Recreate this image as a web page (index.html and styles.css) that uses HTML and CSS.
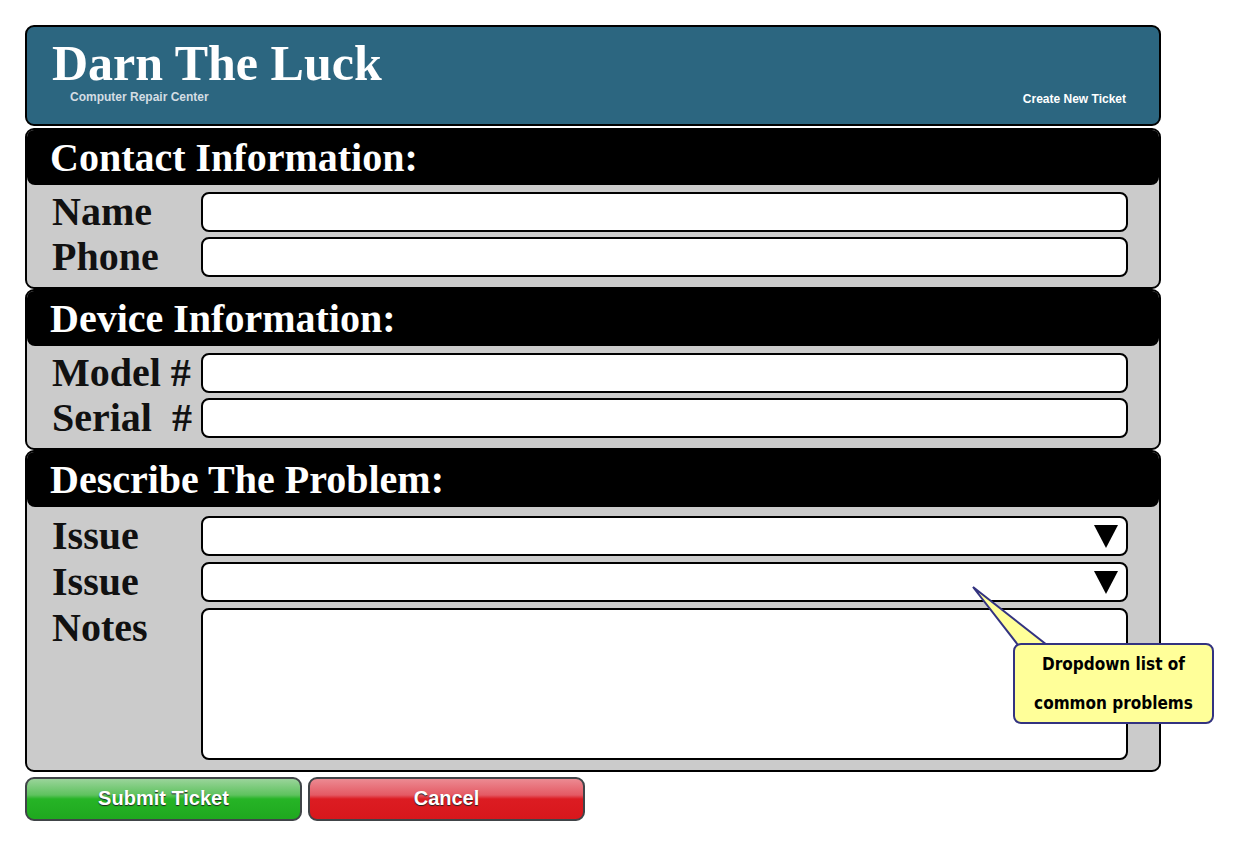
FILE: index.html
```html
<!DOCTYPE html>
<html>
<head>
<meta charset="utf-8">
<link rel="stylesheet" href="styles.css">
</head>
<body>
<div class="page">
  <header class="masthead">
    <div class="brand">
      <h1 class="brand-title">Darn The Luck</h1>
      <div class="brand-sub">Computer Repair Center</div>
    </div>
    <div class="masthead-link">Create New Ticket</div>
  </header>

  <div class="form">
    <section class="section">
      <h2 class="section-title">Contact Information:</h2>
      <div class="section-body">
        <label class="label">Name</label><div class="field"></div>
        <label class="label">Phone</label><div class="field"></div>
      </div>
    </section>

    <section class="section">
      <h2 class="section-title">Device Information:</h2>
      <div class="section-body">
        <label class="label">Model #</label><div class="field"></div>
        <label class="label">Serial&nbsp; #</label><div class="field"></div>
      </div>
    </section>

    <section class="section section-last">
      <h2 class="section-title">Describe The Problem:</h2>
      <div class="section-body">
        <label class="label">Issue</label><div class="field select"><span class="arrow"></span></div>
        <label class="label">Issue</label><div class="field select"><span class="arrow"></span></div>
        <label class="label label-top">Notes</label><div class="field textarea"></div>
      </div>
    </section>

    <div class="callout">
      <svg class="callout-tail" width="90" height="62" viewBox="0 0 90 62">
        <polygon points="2,2 47,60 76,60" fill="#ffff99" stroke="#333380" stroke-width="2" stroke-linejoin="miter"/>
      </svg>
      <div class="callout-box">
        <div>Dropdown list of</div>
        <div>common problems</div>
      </div>
    </div>
  </div>

  <div class="actions">
    <button class="btn btn-green">Submit Ticket</button>
    <button class="btn btn-red">Cancel</button>
  </div>
</div>
</body>
</html>
```

FILE: styles.css
```css
html, body {
  margin: 0;
  padding: 0;
  background: #fff;
}

.page {
  padding: 25px 0 0 25px;
  width: 1136px;
}

.masthead {
  box-sizing: border-box;
  height: 101px;
  background: #2c6680;
  border: 2px solid #000;
  border-radius: 9px;
  display: flex;
  justify-content: space-between;
  align-items: flex-end;
  padding: 0 33px 18px 25px;
}

.brand-title {
  margin: 0;
  font-family: "Liberation Serif", "Times New Roman", serif;
  font-weight: bold;
  font-size: 50px;
  line-height: 48px;
  color: #fff;
}

.brand-sub {
  margin: 3px 0 2px 18px;
  font-family: "Liberation Sans", Arial, sans-serif;
  font-weight: bold;
  font-size: 12px;
  color: #d4dde3;
}

.masthead-link {
  font-family: "Liberation Sans", Arial, sans-serif;
  font-weight: bold;
  font-size: 12px;
  color: #fff;
  margin-bottom: 0;
}

.form {
  position: relative;
  margin-top: 2px;
}

.section {
  box-sizing: border-box;
  border: 2px solid #000;
  border-radius: 9px;
  background: #cbcbcb;
  overflow: hidden;
}

.section-title {
  margin: 0;
  height: 55px;
  background: #000;
  border-radius: 0 0 8px 8px;
  color: #fff;
  font-family: "Liberation Serif", "Times New Roman", serif;
  font-weight: bold;
  font-size: 40px;
  line-height: 56px;
  padding-left: 23px;
}

.section-body {
  display: grid;
  grid-template-columns: 149px 927px;
  row-gap: 5px;
  align-items: center;
  padding: 7px 0 10px 25px;
}

.section-last .section-body {
  padding-top: 9px;
  row-gap: 6px;
}

.label {
  font-family: "Liberation Serif", "Times New Roman", serif;
  font-weight: bold;
  font-size: 40px;
  line-height: 40px;
  color: #111;
  white-space: nowrap;
}

.label-top {
  align-self: start;
}

.field {
  box-sizing: border-box;
  height: 40px;
  background: #fff;
  border: 2px solid #000;
  border-radius: 8px;
  position: relative;
}

.textarea {
  height: 152px;
}

.arrow {
  position: absolute;
  right: 8px;
  top: 7px;
  width: 0;
  height: 0;
  border-left: 12px solid transparent;
  border-right: 12px solid transparent;
  border-top: 23px solid #000;
}

.callout {
  position: absolute;
  left: 946px;
  top: 457px;
}

.callout-tail {
  position: absolute;
  left: 0;
  top: 0;
}

.callout-box {
  position: absolute;
  left: 42px;
  top: 58px;
  box-sizing: border-box;
  width: 201px;
  height: 81px;
  background: #ffff99;
  border: 2px solid #333380;
  border-radius: 8px;
  font-family: "DejaVu Sans Condensed", "DejaVu Sans", sans-serif;
  font-weight: bold;
  font-size: 17px;
  line-height: 39px;
  color: #000;
  text-align: center;
  padding-top: 0;
}

.actions {
  display: flex;
  gap: 6px;
  margin-top: 5px;
}

.btn {
  box-sizing: border-box;
  width: 277px;
  height: 44px;
  border: 2px solid #404448;
  border-radius: 9px;
  font-family: "Liberation Sans", Arial, sans-serif;
  font-weight: bold;
  font-size: 20px;
  color: #fff;
  text-shadow: 0 1px 1px #222;
  padding: 0;
  padding-bottom: 2px;
}

.btn-green {
  background: linear-gradient(to bottom, #9ad49a 0%, #5ec25e 40%, #26b426 50%, #1fa81f 100%);
}

.btn-red {
  background: linear-gradient(to bottom, #ec8a92 0%, #e45a64 40%, #dc1c22 50%, #d8171c 100%);
}
```
